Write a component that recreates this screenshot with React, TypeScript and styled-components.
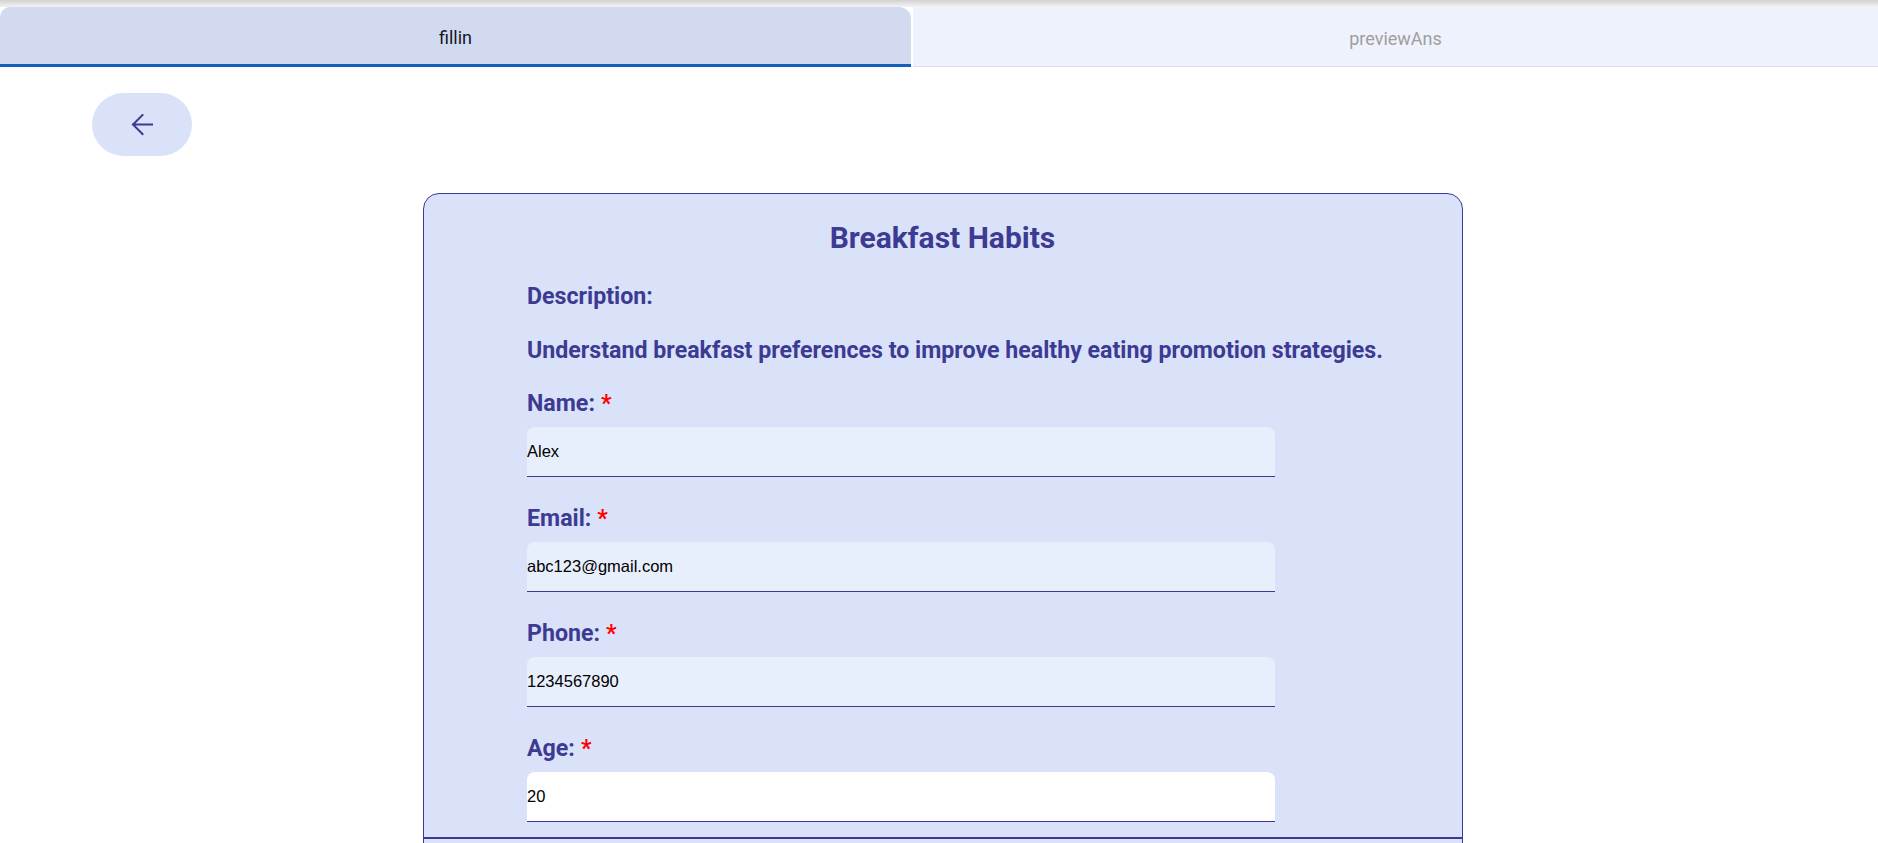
import * as React from "react";
import styled, { createGlobalStyle } from "styled-components";

const GlobalStyle = createGlobalStyle`
  html, body {
    margin: 0;
    padding: 0;
    overflow: hidden;
    background: #ffffff;
    font-family: Roboto, "Noto Sans", Arial, sans-serif;
  }
  * {
    box-sizing: border-box;
  }
`;

const Page = styled.div`
  width: 100vw;
  min-height: 100vh;
`;

const TopShade = styled.div`
  height: 7px;
  background: linear-gradient(#d2d2d2, #f3f3f3);
`;

const TabRow = styled.div`
  display: flex;
  height: 60px;
`;

const Tab = styled.div<{ $active?: boolean }>`
  display: flex;
  align-items: center;
  justify-content: center;
  padding-top: 4px;
  font-size: 18px;
  cursor: pointer;
  ${(p) =>
    p.$active
      ? `
    flex: 0 0 911px;
    background: #d1daef;
    color: #161625;
    border-bottom: 3px solid #1560bd;
    border-radius: 10px 12px 0 0;
  `
      : `
    flex: 1;
    margin-left: 2px;
    background: #eef2fd;
    color: #9e9e9e;
    border-bottom: 1px solid #dcdde8;
  `}
`;

const Toolbar = styled.div`
  padding: 26px 0 0 92px;
`;

const BackButton = styled.button`
  width: 100px;
  height: 63px;
  border: none;
  border-radius: 32px;
  background: #d9e2f8;
  display: flex;
  align-items: center;
  justify-content: center;
  cursor: pointer;
`;

const Content = styled.div`
  padding: 37px 0 0 8px;
`;

const Card = styled.section`
  width: 1040px;
  margin: 0 auto;
  background: #d9e2f8;
  border: 1px solid #3d3a93;
  border-radius: 16px;
  color: #3d3a93;
`;

const CardBody = styled.div`
  padding: 27px 104px 15px 103px;
`;

const Title = styled.h1`
  margin: 0 0 27px;
  font-size: 30px;
  line-height: 34px;
  font-weight: 700;
  text-align: center;
`;

const Text = styled.p<{ $gap: number }>`
  margin: 0 0 ${(p) => p.$gap}px;
  font-size: 23.2px;
  line-height: 28px;
  font-weight: 700;
  white-space: nowrap;
`;

const Field = styled.div`
  display: flex;
  flex-direction: column;
  margin-bottom: 27px;

  &:last-child {
    margin-bottom: 0;
  }
`;

const Label = styled.label`
  font-size: 23.2px;
  line-height: 28px;
  font-weight: 700;
  margin-bottom: 10px;
`;

const Required = styled.span`
  color: #ff0000;
  margin-left: 6px;
`;

const Input = styled.input<{ $plain?: boolean }>`
  width: 748px;
  height: 50px;
  padding: 0;
  border: none;
  border-bottom: 1px solid #3d3a93;
  border-radius: 8px 8px 0 0;
  background: ${(p) => (p.$plain ? "#ffffff" : "#e8effc")};
  font-family: "Liberation Sans", Arial, sans-serif;
  font-size: 16.5px;
  color: #000000;
  outline: none;
`;

const Divider = styled.div`
  height: 2px;
  background: #3d3a93;
`;

const Rest = styled.div`
  height: 120px;
`;

const fields = [
  { label: "Name:", value: "Alex" },
  { label: "Email:", value: "abc123@gmail.com" },
  { label: "Phone:", value: "1234567890" },
  { label: "Age:", value: "20", plain: true },
];

function ArrowBack() {
  return (
    <svg width="22" height="22" viewBox="0 0 22 22" fill="none">
      <path
        d="M21 10.5H2M11.5 1L2 10.5L11.5 20"
        stroke="#3d3a93"
        strokeWidth="2"
        strokeLinecap="square"
      />
    </svg>
  );
}

export default function App() {
  return (
    <>
      <GlobalStyle />
      <Page>
        <TopShade />
        <TabRow>
          <Tab $active>fillin</Tab>
          <Tab>previewAns</Tab>
        </TabRow>
        <Toolbar>
          <BackButton aria-label="back">
            <ArrowBack />
          </BackButton>
        </Toolbar>
        <Content>
          <Card>
            <CardBody>
              <Title>Breakfast Habits</Title>
              <Text $gap={26}>Description:</Text>
              <Text $gap={25}>
                Understand breakfast preferences to improve healthy eating promotion strategies.
              </Text>
              {fields.map((f) => (
                <Field key={f.label}>
                  <Label>
                    {f.label}
                    <Required>*</Required>
                  </Label>
                  <Input defaultValue={f.value} $plain={f.plain} />
                </Field>
              ))}
            </CardBody>
            <Divider />
            <Rest />
          </Card>
        </Content>
      </Page>
    </>
  );
}
